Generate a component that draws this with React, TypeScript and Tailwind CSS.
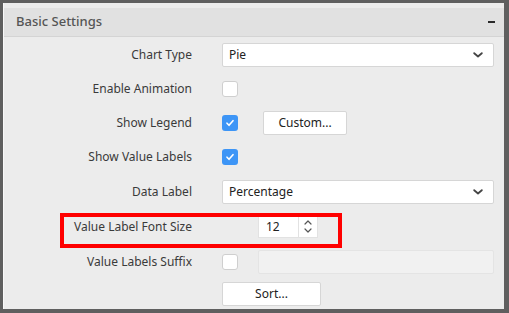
import React from 'react';

const font = { fontFamily: '"Noto Sans", "Open Sans", sans-serif' };

function Checkbox({ checked }: { checked?: boolean }) {
  if (checked) {
    return (
      <div className="w-4 h-4 rounded-[3px] bg-[#3d95f6] flex items-center justify-center">
        <svg width="10" height="10" viewBox="0 0 10 10" fill="none">
          <path d="M2 5.2l2 2.1 4-4.6" stroke="#fff" strokeWidth="1.6" strokeLinecap="round" strokeLinejoin="round" />
        </svg>
      </div>
    );
  }
  return <div className="w-4 h-4 rounded-[3px] bg-white border border-[#cfcfcf]" />;
}

function Select({ value }: { value: string }) {
  return (
    <div className="w-[272px] h-6 bg-white border border-[#d6d6d6] rounded-[2px] flex items-center justify-between pl-[6px] pr-[10px]">
      <span className="text-[12px] text-[#222]">{value}</span>
      <svg width="10" height="6" viewBox="0 0 10 6" fill="none">
        <path d="M1.2 1.2l3.8 3.3 3.8-3.3" stroke="#444" strokeWidth="1.8" strokeLinecap="round" strokeLinejoin="round" />
      </svg>
    </div>
  );
}

function Row({ label, h, children, extra }: { label: string; h: string; children?: React.ReactNode; extra?: React.ReactNode }) {
  return (
    <div className={`relative flex items-center ${h}`}>
      <div className="w-[188px] text-right text-[12px] text-[#3a3a3a] shrink-0">{label}</div>
      <div className="ml-[30px] flex items-center">{children}</div>
      {extra}
    </div>
  );
}

export default function App() {
  return (
    <div className="w-[509px] h-[313px] bg-[#5f5f5f] pt-[3px] pl-[3px] pr-[5px] pb-[4px]" style={font}>
      <div className="w-full h-full bg-[#ececec] border-l border-[#f8f8f8] pt-[5px] flex flex-col">
        {/* header */}
        <div className="h-[29px] bg-[#e1e1e1] border-b border-[#d4d4d4] flex items-center justify-between pl-[12px] pr-[9px] shrink-0">
          <span className="text-[13px] text-[#555] font-medium">Basic Settings</span>
          <div className="w-[7px] h-[2px] bg-[#2a2a2a]" />
        </div>

        <div className="flex flex-col">
          <Row label="Chart Type" h="h-[35px]">
            <Select value="Pie" />
          </Row>
          <Row label="Enable Animation" h="h-[33px]">
            <Checkbox />
          </Row>
          <Row label="Show Legend" h="h-[35px]">
            <Checkbox checked />
            <button className="ml-[25px] w-[84px] h-6 bg-white border border-[#d6d6d6] rounded-[2px] text-[12px] text-[#222]">
              Custom...
            </button>
          </Row>
          <Row label="Show Value Labels" h="h-[34px]">
            <Checkbox checked />
          </Row>
          <Row label="Data Label" h="h-[35px]">
            <Select value="Percentage" />
          </Row>
          <Row
            label="Value Label Font Size"
            h="h-[35px]"
            extra={
              <div className="absolute left-[56px] top-[4px] w-[282px] h-[35px] border-[4px] border-[#ff0000]" />
            }
          >
            <div className="ml-[36px] flex h-[22px] bg-white border border-[#e2e2e2]">
              <div className="w-[39px] flex items-center pl-[7px] text-[12px] text-[#222]">12</div>
              <div className="w-[19px] border-l border-[#e2e2e2] flex flex-col items-center justify-center gap-[3px]">
                <svg width="8" height="5" viewBox="0 0 8 5" fill="none">
                  <path d="M1 4l3-3 3 3" stroke="#555" strokeWidth="1.2" strokeLinecap="round" strokeLinejoin="round" />
                </svg>
                <svg width="8" height="5" viewBox="0 0 8 5" fill="none">
                  <path d="M1 1l3 3 3-3" stroke="#555" strokeWidth="1.2" strokeLinecap="round" strokeLinejoin="round" />
                </svg>
              </div>
            </div>
          </Row>
          <Row label="Value Labels Suffix" h="h-[36px]">
            <Checkbox />
            <div className="ml-[20px] w-[236px] h-6 bg-[#f1f1f1] border border-[#e4e4e4] rounded-[2px]" />
          </Row>
          <div className="flex h-[27px] items-center">
            <button className="ml-[218px] w-[99px] h-6 bg-white border border-[#d6d6d6] rounded-[2px] text-[12px] text-[#222]">
              Sort...
            </button>
          </div>
        </div>
      </div>
    </div>
  );
}
